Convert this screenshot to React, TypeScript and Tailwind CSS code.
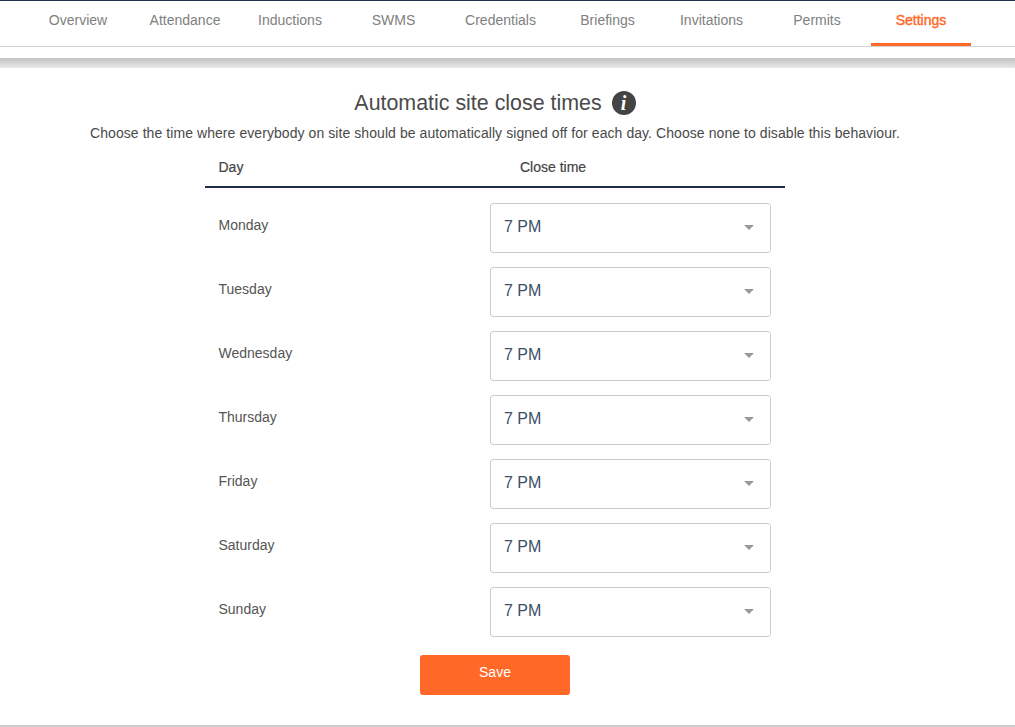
import React from 'react';

const tabs = [
  { label: 'Overview', width: 'w-[106px]' },
  { label: 'Attendance', width: 'w-[108px]' },
  { label: 'Inductions', width: 'w-[102px]' },
  { label: 'SWMS', width: 'w-[105px]' },
  { label: 'Credentials', width: 'w-[109px]' },
  { label: 'Briefings', width: 'w-[105px]' },
  { label: 'Invitations', width: 'w-[103px]' },
  { label: 'Permits', width: 'w-[108px]' },
];

const days = ['Monday', 'Tuesday', 'Wednesday', 'Thursday', 'Friday', 'Saturday', 'Sunday'];

function TimeSelect() {
  return (
    <div className="flex h-[50px] w-[281px] items-center justify-between rounded-[3px] border border-[#cccccc] bg-white pb-[2px] pl-[13px] pr-[16px] text-[16px] text-[#3c5068]">
      <span>7 PM</span>
      <span className="h-0 w-0 border-x-[5px] border-t-[5px] border-x-transparent border-t-[#999999]" />
    </div>
  );
}

export default function App() {
  return (
    <div className="h-[727px] w-[1015px] overflow-hidden bg-white font-['Liberation_Sans',Arial,sans-serif] text-[14px] leading-[20px] text-[#555555]">
      <nav className="flex h-[47px] border-y border-t-[#26314f] border-b-[#d4d4d4] pl-[25px]">
        {tabs.map((tab) => (
          <div key={tab.label} className={`${tab.width} pt-[9px] text-center text-[#808080]`}>
            {tab.label}
          </div>
        ))}
        <div className="h-[45px] w-[100px] border-b-[3px] border-[#ff6827] pt-[9px] text-center text-[#ff6827] [-webkit-text-stroke:0.4px_#ff6827]">
          Settings
        </div>
      </nav>

      <div className="mt-[11px] h-[10px] bg-gradient-to-b from-[#c4c4c4] to-[#e8e8e8]" />

      <main className="flex h-[657px] w-[990px] flex-col items-center">
        <div className="mt-[23px] flex h-[24px] items-center">
          <h1 className="text-[21.4px] text-[#4a4a4a]">Automatic site close times</h1>
          <span className="ml-[10px] flex h-[24px] w-[24px] items-center justify-center rounded-full bg-[#444444] font-['Liberation_Serif',serif] text-[20px] font-bold italic text-white">
            i
          </span>
        </div>
        <p className="mt-[9px] leading-[18px] tracking-[0.07px] text-[#4a4a4a]">
          Choose the time where everybody on site should be automatically signed off for each day. Choose none to disable this behaviour.
        </p>

        <div className="mt-[9px] w-[580px]">
          <div className="flex h-[37px] border-b-2 border-[#1f2a48] pt-[6px] text-[#444444] [-webkit-text-stroke:0.2px_#444444]">
            <div className="w-[315px] pl-[13.5px]">Day</div>
            <div>Close time</div>
          </div>
          <div className="flex flex-col gap-[14px] pt-[15px]">
            {days.map((day) => (
              <div key={day} className="flex items-start">
                <div className="w-[285px] pl-[13.5px] pt-[12px] text-[#555555]">{day}</div>
                <TimeSelect />
              </div>
            ))}
          </div>
        </div>

        <button className="mt-[18px] h-[40px] w-[150px] rounded-[3px] bg-[#ff6827] pb-[7px] text-[14px] text-white">
          Save
        </button>
      </main>
      <div className="h-[2px] bg-[#cccccc]" />
    </div>
  );
}
